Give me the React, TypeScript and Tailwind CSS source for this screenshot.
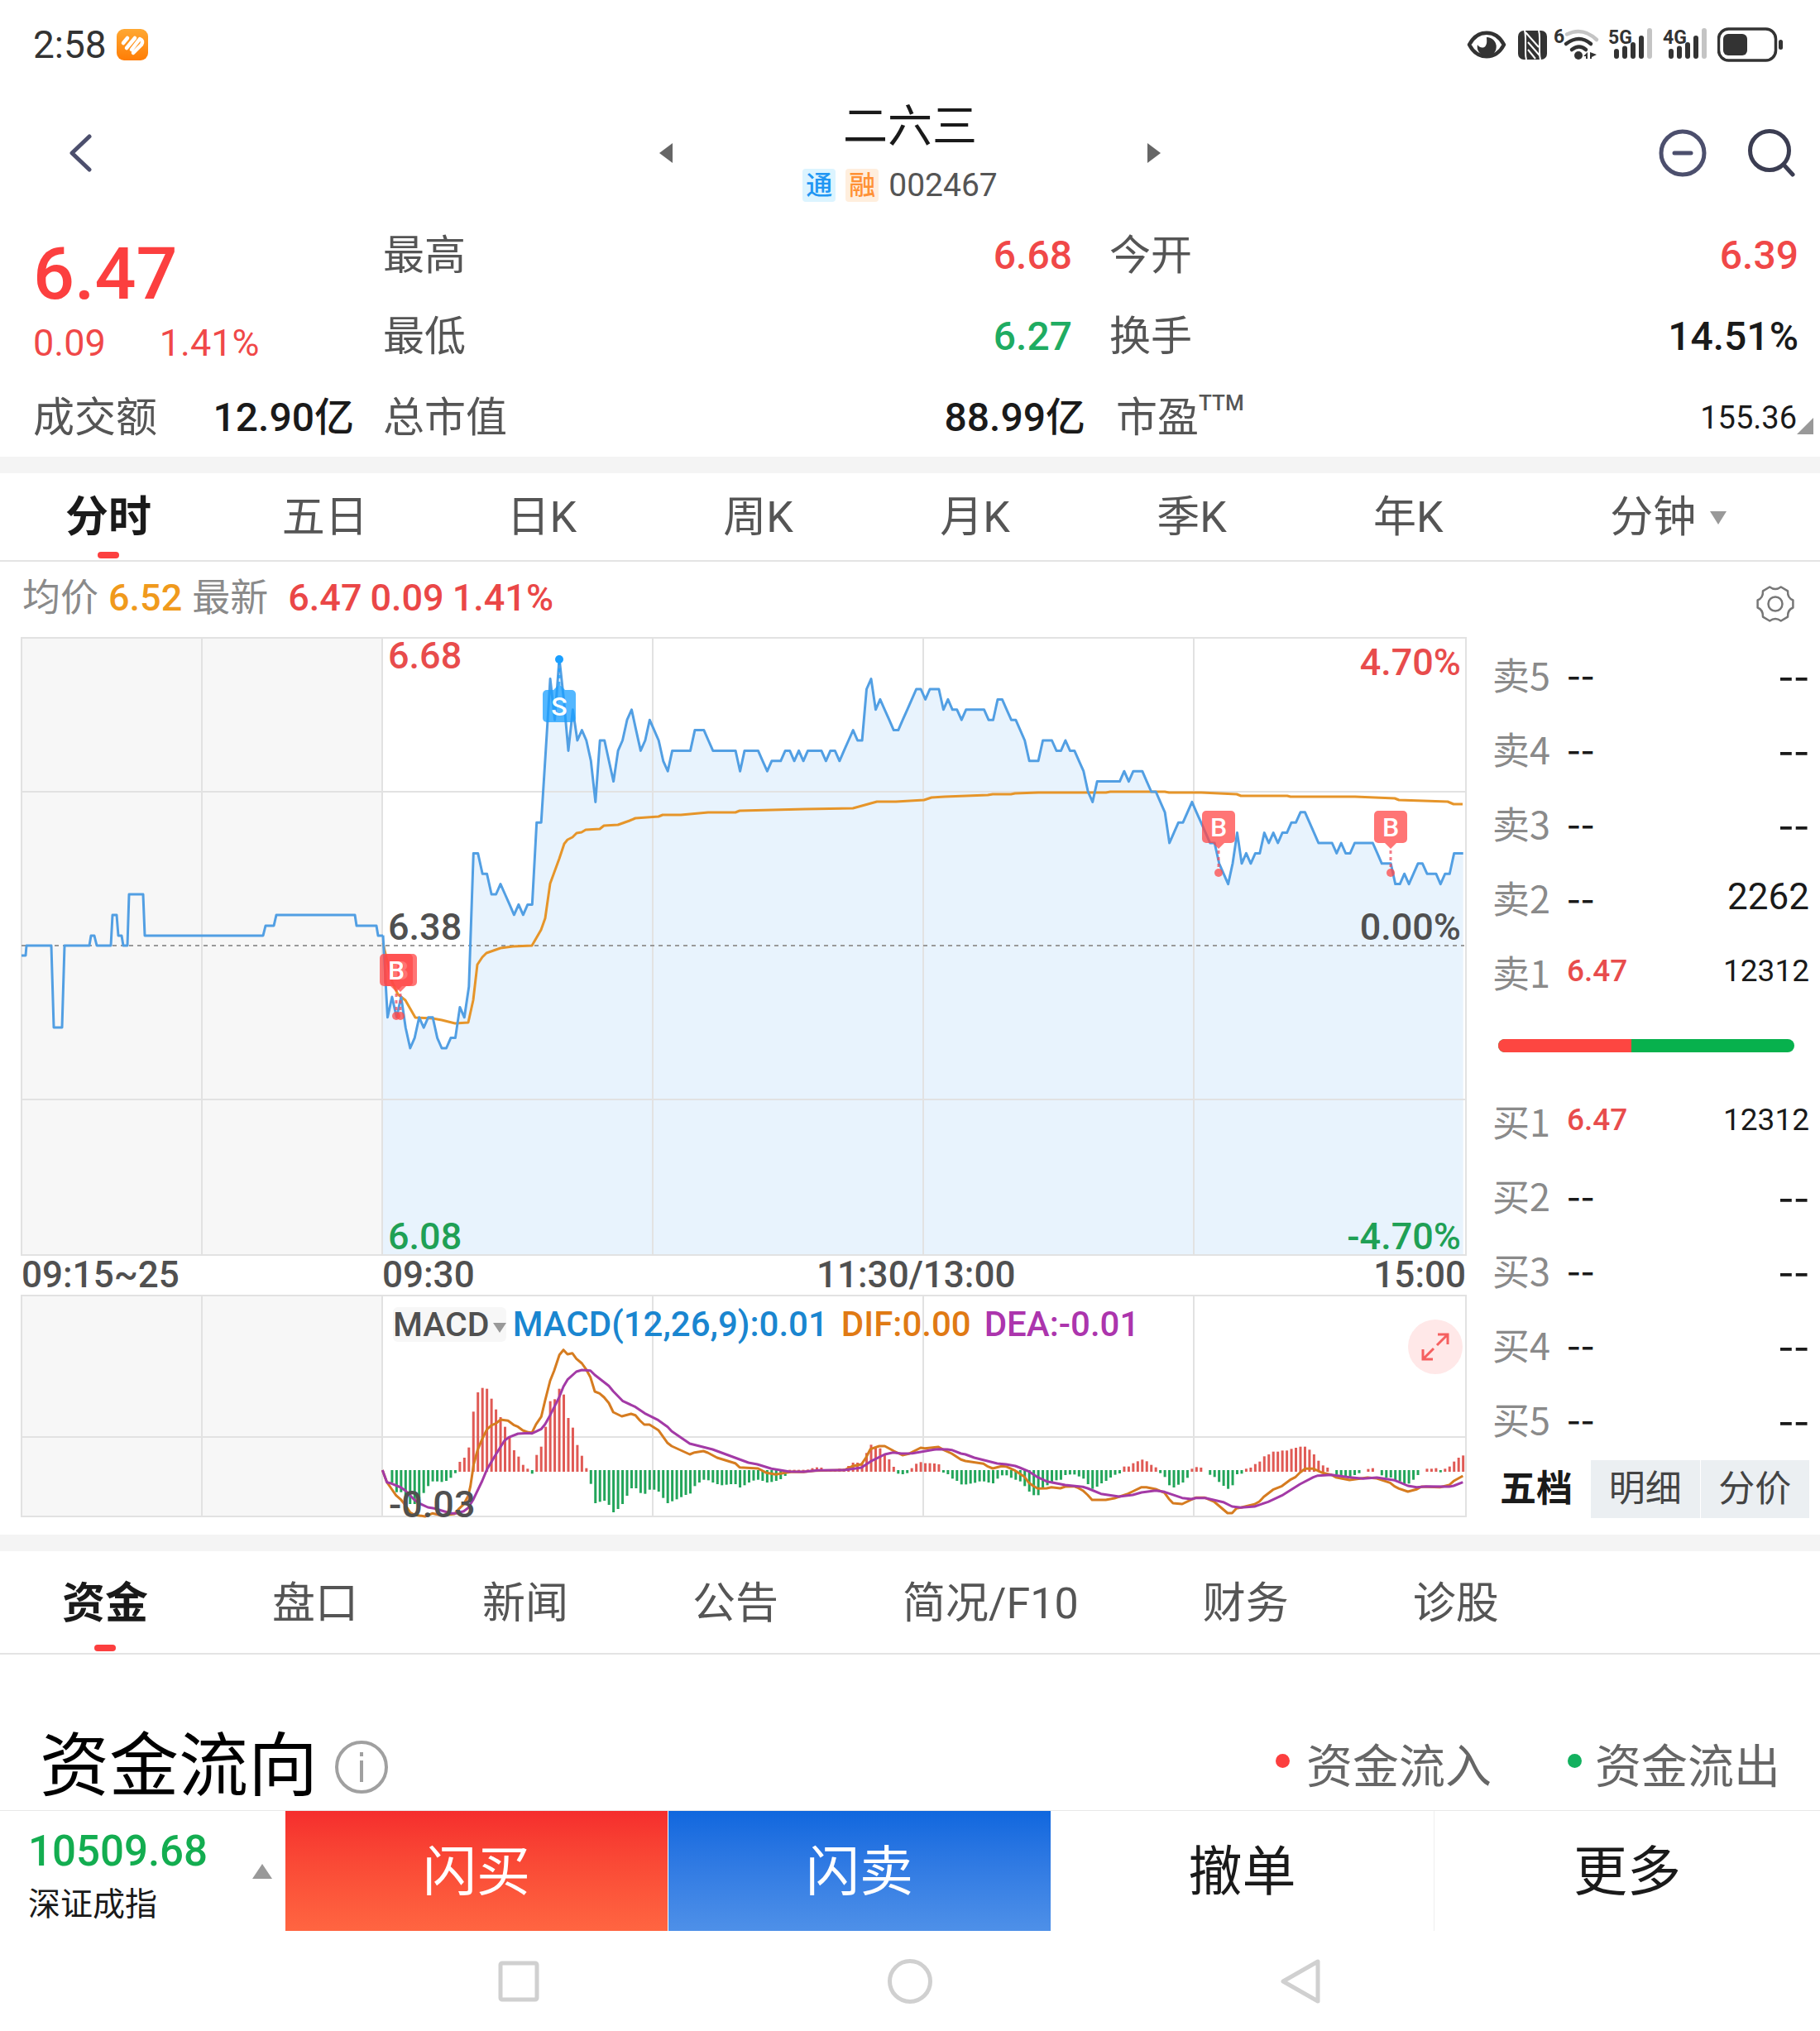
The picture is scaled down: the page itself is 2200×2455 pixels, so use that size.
import React from 'react';

/* ---------- Market data ---------- */

const PREV_CLOSE_Y = 1143;
const TICK = 12.4;
const MINUTE = 5.463;
const OPEN_X = 463;
const MACD_ZERO = 1778;

const minuteX = (i: number) => OPEN_X + i * MINUTE;

// Price per minute, in cents above the previous close.
const price: number[] = [
  1, -7, -5, -7, -5, -8, -10, -9, -7, -8, -7, -7, -9, -10, -10, -9, -9, -6, -7, -4,
  9, 9, 7, 7, 5, 5, 6, 5, 4, 3, 4, 3, 4, 4, 12, 12, 19, 26, 22, 28,
  24, 19, 23, 20, 21, 20, 18, 14, 20, 20, 18, 16, 19, 20, 22, 23, 21, 19, 20, 22,
  21, 20, 18, 17, 19, 19, 19, 19, 19, 21, 21, 21, 20, 19, 19, 19, 19, 19, 19, 17,
  19, 19, 19, 19, 18, 17, 18, 18, 18, 19, 19, 18, 19, 18, 19, 19, 19, 19, 18, 19,
  19, 18, 19, 20, 21, 20, 20, 25, 26, 23, 24, 23, 22, 21, 21, 22, 23, 24, 25, 25,
  24, 25, 25, 25, 23, 24, 23, 23, 22, 23, 23, 23, 23, 23, 22, 22, 24, 24, 23, 22,
  22, 21, 20, 18, 18, 18, 20, 20, 20, 19, 19, 20, 19, 19, 18, 17, 15, 14, 16, 16,
  16, 16, 16, 16, 17, 16, 17, 17, 17, 16, 15, 15, 14, 13, 10, 11, 12, 12, 13, 14,
  13, 12, 11, 10, 10, 8, 7, 6, 8, 11, 8, 9, 8, 9, 9, 11, 10, 11, 10, 11,
  11, 12, 12, 13, 13, 12, 11, 10, 10, 10, 10, 9, 10, 9, 9, 10, 10, 10, 10, 10,
  9, 8, 8, 8, 6, 6, 7, 6, 7, 8, 8, 7, 7, 7, 6, 7, 7, 9, 9, 9,
];

const auction =
  '26,1155 31,1155 32,1143 62,1143 65,1242 75,1242 78,1143 108,1143 110,1131 114,1131 117,1143 134,1143 136,1106 141,1106 143,1131 147,1131 149,1143 154,1143 156,1081 173,1081 175,1131 318,1131 321,1119 331,1119 334,1106 429,1106 431,1119 455,1119 457,1131 463,1131';

const average =
  '463,1140 474,1187 481,1202 490,1209 502,1230 523,1231 534,1233 550,1237 566,1236 572,1209 577,1166 583,1157 588,1152 605,1146 620,1144 643,1143 654,1124 659,1110 665,1068 676,1038 682,1020 686,1015 692,1012 697,1007 703,1006 708,1003 725,1002 730,998 747,997 761,992 768,989 796,987 801,985 823,985 856,982 889,982 894,980 973,978 1031,977 1060,969 1083,969 1117,967 1126,964 1142,963 1194,961 1200,960 1222,960 1227,959 1255,958 1337,958 1342,957 1408,957 1413,958 1452,958 1495,960 1500,962 1556,962 1560,963 1638,963 1686,965 1691,967 1750,969 1757,972 1768,972';

// MACD histogram per minute, three units to a pixel.
const histogram: number[] = [
  0, 0, -42, -77, -77, -97, -120, -120, -100, -80, -55, -38, -38, -40, -36, -25, -8, 33, 48, 85,
  215, 285, 301, 298, 262, 223, 195, 160, 125, 75, 52, 22, 8, -10, 58, 88, 160, 253, 260, 298,
  277, 192, 157, 94, 55, 10, -47, -117, -112, -108, -123, -150, -138, -120, -90, -63, -63, -80, -83, -68,
  -68, -75, -98, -117, -110, -103, -95, -87, -82, -55, -42, -32, -34, -42, -48, -52, -50, -48, -48, -60,
  -52, -42, -35, -32, -36, -42, -40, -36, -30, -18, 4, 4, 4, 4, 5, 10, 13, 12, 5, 5,
  6, 8, 8, 18, 30, 30, 28, 65, 95, 87, 82, 60, 42, 15, -10, -12, -8, 10, 26, 32,
  28, 28, 27, 24, -6, -12, -28, -36, -49, -49, -46, -43, -38, -38, -42, -45, -28, -16, -16, -25,
  -32, -38, -55, -75, -88, -88, -65, -52, -40, -34, -32, -15, -13, -13, -20, -28, -48, -65, -57, -45,
  -36, -24, -14, -9, 16, 16, 28, 35, 41, 35, 22, 13, -8, -22, -52, -60, -50, -42, -25, 8,
  14, 12, 0, -14, -22, -40, -54, -65, -52, -12, -10, 8, 12, 25, 34, 53, 60, 70, 70, 74,
  74, 80, 84, 88, 88, 77, 60, 37, 20, 12, 0, -14, -18, -20, -22, -15, -8, 0, 7, 10,
  0, -16, -25, -24, -34, -38, -45, -46, -32, -15, 0, 8, 8, 10, -5, 8, 16, 34, 48, 56,
];

type Pt = [number, number];
const trace = (originX: number, pts: Pt[]) =>
  pts.map(([x, y]) => `${(originX + x / 2.24).toFixed(1)},${(1540 + y / 3).toFixed(1)}`).join(' ');

const dif =
  trace(440, [
    [50, 711], [62, 755], [75, 780], [87, 803], [100, 818], [112, 838], [125, 865], [137, 873], [165, 879], [185, 868],
    [210, 875], [245, 870], [258, 850], [270, 835], [282, 805], [288, 770], [297, 690], [307, 640], [320, 598], [333, 563],
    [346, 548], [357, 542], [370, 528], [390, 532], [405, 547], [417, 554], [430, 567], [445, 574], [455, 575], [466, 545],
    [480, 517], [490, 460], [504, 387], [515, 350], [529, 293], [540, 275], [551, 291], [564, 287], [575, 307], [590, 324],
    [602, 347], [613, 374], [625, 426], [638, 433], [650, 447], [663, 468], [675, 501], [698, 516], [723, 507], [735, 512],
    [747, 531], [759, 546], [773, 546], [797, 566], [822, 613], [833, 624], [882, 654], [895, 647], [919, 642], [931, 648],
    [956, 666], [1005, 686], [1017, 701], [1067, 705], [1090, 721], [1115, 727], [1140, 721], [1160, 717], [1190, 718],
    [1220, 713], [1300, 711], [1322, 697], [1347, 690], [1359, 666], [1371, 635], [1395, 624], [1410, 624], [1435, 642],
    [1458, 657], [1475, 652],
  ]) +
  ' ' +
  trace(1100, [
    [0, 650], [29, 630], [40, 632], [77, 627], [90, 637], [113, 651], [138, 673], [150, 678], [199, 688], [211, 698],
    [224, 705], [248, 697], [260, 698], [285, 713], [309, 734], [322, 757], [334, 769], [346, 778], [370, 777], [383, 773],
    [407, 777], [420, 771], [444, 770], [456, 776], [468, 785], [481, 801], [493, 819], [530, 819], [554, 813], [590, 797],
    [602, 789], [627, 773], [640, 773], [665, 780], [689, 793], [701, 815], [712, 831], [737, 834], [762, 818], [774, 811],
    [798, 811], [823, 825], [860, 867], [872, 867], [884, 850], [896, 847], [933, 835], [946, 825], [958, 808], [983, 782],
    [1007, 769], [1031, 745], [1044, 736], [1056, 720], [1070, 706], [1092, 706], [1117, 721], [1141, 728], [1153, 737],
    [1190, 747], [1239, 738], [1264, 741], [1300, 757], [1312, 770], [1324, 778], [1348, 789], [1372, 781], [1385, 771],
    [1435, 773], [1460, 765], [1472, 751], [1497, 732],
  ]);

const dea =
  trace(440, [
    [50, 711], [62, 755], [75, 760], [100, 774], [112, 785], [137, 820], [150, 832], [173, 846], [190, 850], [235, 868],
    [250, 868], [270, 860], [282, 848], [295, 820], [320, 750], [333, 708], [357, 654], [380, 605], [392, 592], [417, 579],
    [445, 577], [455, 578], [480, 562], [490, 545], [504, 512], [529, 445], [540, 408], [551, 383], [575, 354], [590, 348],
    [613, 350], [625, 366], [663, 406], [675, 425], [700, 460], [735, 482], [760, 505], [797, 530], [822, 554], [833, 570],
    [882, 615], [944, 636], [1041, 684], [1065, 690], [1103, 706], [1150, 716], [1190, 717], [1230, 712], [1300, 711],
    [1347, 702], [1371, 680], [1410, 654], [1433, 647], [1455, 651], [1485, 650],
  ]) +
  ' ' +
  trace(1100, [
    [65, 637], [77, 635], [101, 636], [113, 638], [138, 651], [150, 654], [174, 666], [236, 687], [260, 690], [285, 696],
    [297, 702], [322, 716], [346, 737], [370, 752], [420, 765], [468, 772], [481, 777], [517, 797], [566, 807], [603, 801],
    [627, 792], [665, 785], [689, 790], [737, 812], [762, 816], [774, 812], [800, 812], [848, 827], [872, 843], [896, 847],
    [933, 843], [970, 826], [1007, 803], [1056, 762], [1092, 737], [1104, 731], [1141, 728], [1190, 737], [1227, 742],
    [1264, 738], [1312, 748], [1324, 754], [1348, 768], [1372, 773], [1397, 770], [1460, 771], [1472, 768], [1497, 755],
  ]);

/* ---------- Status bar ---------- */

function SignalBars({ label }: { label: string }) {
  return (
    <svg viewBox="0 0 54 40" className="h-10 w-[54px] overflow-visible" aria-label={label + ' signal'}>
      <text x="0" y="19" fontSize="23" fontWeight="700" fill="#333" className="font-['Roboto',sans-serif]">
        {label}
      </text>
      <g strokeWidth="6" strokeLinecap="round" stroke="#333">
        <path d="M10 28V34M20 24.500V34M30 20V34M40 12V34" />
        <path d="M50 3V34" stroke="#c4c4c4" />
      </g>
    </svg>
  );
}

function StatusBar() {
  return (
    <div className="flex h-[108px] items-center pl-10 pr-11">
      <span className="text-[46px] leading-none text-[#333]">2:58</span>
      <svg viewBox="0 0 38 38" className="ml-3 h-[38px] w-[38px]" aria-hidden="true">
        <defs>
          <linearGradient id="appBadge" x1="0" y1="0" x2="0" y2="1">
            <stop offset="0" stopColor="#ffa832" />
            <stop offset="1" stopColor="#ff7d05" />
          </linearGradient>
        </defs>
        <rect width="38" height="38" rx="9" fill="url(#appBadge)" />
        <g stroke="#fff" strokeWidth="4.500" strokeLinecap="round" strokeLinejoin="round" fill="none">
          <path d="M8 17 13 11" />
          <path d="M12 23 22 11" />
          <path d="M18 25 28 12Q33 14 30 19L20 29" />
        </g>
      </svg>
      <div className="ml-auto flex items-center">
        <svg viewBox="0 0 48 34" className="h-[34px] w-12" aria-label="Eye comfort">
          <path d="M3 17C13-2 35-2 45 17C35 36 13 36 3 17Z" fill="none" stroke="#333" strokeWidth="4.500" strokeLinejoin="round" />
          <path d="M24 8a11.500 11.500 0 1 1-11 9c2 4 8 5 10 1 2-3 1-7 1-10Z" fill="#333" />
        </svg>
        <svg viewBox="0 0 35 35" className="ml-3.5 h-[35px] w-[35px]" aria-label="NFC">
          <rect width="35" height="35" rx="7" fill="#333" />
          <path d="M8 0q1 4 1 9v17q0 6 1 9M27 35q-1-4-1-9V9q0-6-1-9" stroke="#fff" strokeWidth="2" fill="none" />
          <path d="M9 2 25 20M12 14 26 30M12 23 21 34" stroke="#fff" strokeWidth="2" fill="none" />
        </svg>
        <svg viewBox="0 0 54 40" className="ml-2.5 h-10 w-[54px] overflow-visible" aria-label="Wi-Fi">
          <text x="-2" y="18" fontSize="23" fontWeight="700" fill="#333" className="font-['Roboto',sans-serif]">
            6
          </text>
          <g fill="none" strokeWidth="4.500" strokeLinecap="round" stroke="#333">
            <path d="M14 7.500Q33-2 50 14" stroke="#c4c4c4" />
            <path d="M13 19Q29 7 43 19" />
            <path d="M20 26Q29 19 37 26" />
          </g>
          <circle cx="28" cy="33" r="5" fill="#333" />
          <path d="M34 34 39 29V37H37V34ZM42 29 50 32 44 35V37H42Z" fill="#333" />
        </svg>
        <div className="ml-2.5">
          <SignalBars label="5G" />
        </div>
        <div className="ml-3">
          <SignalBars label="4G" />
        </div>
        <svg viewBox="0 0 80 42" className="ml-3 h-[42px] w-20" aria-label="Battery">
          <rect x="1.500" y="2" width="69" height="38" rx="12" fill="none" stroke="#333" strokeWidth="3.500" />
          <rect x="7" y="8" width="29" height="26" rx="6" fill="#333" />
          <rect x="74" y="15" width="5" height="12" rx="2.500" fill="#333" />
        </svg>
      </div>
    </div>
  );
}

/* ---------- Title bar ---------- */

function TitleBar() {
  return (
    <header className="grid h-[150px] grid-cols-[1fr_auto_1fr] items-center pt-1">
      <button type="button" aria-label="返回" className="justify-self-start pl-[82px]">
        <svg viewBox="0 0 30 46" className="h-[46px] w-[30px]" fill="none" stroke="#4c4f6d" strokeWidth="5" strokeLinecap="round" strokeLinejoin="round">
          <path d="M26 3 5 23 26 43" />
        </svg>
      </button>
      <div className="flex items-center">
        <button type="button" aria-label="上一只">
          <svg viewBox="0 0 16 24" className="h-6 w-4" fill="#666">
            <path d="M16 0V24L0 12Z" />
          </svg>
        </button>
        <div className="mx-[167px] flex w-60 flex-col items-center">
          <h1 className="text-[54px] leading-[62px] text-[#1a1a1a]">二六三</h1>
          <div className="mt-4 flex items-center pr-6 whitespace-nowrap">
            <span className="flex h-10 w-10 items-center justify-center rounded bg-[#dcf4ff] text-[32px] leading-none font-medium text-[#2196f3]">通</span>
            <span className="ml-3 flex h-10 w-10 items-center justify-center rounded bg-[#ffeedd] text-[32px] leading-none font-medium text-[#ff9135]">融</span>
            <span className="ml-3 text-[39px] leading-[46px] text-[#555]">002467</span>
          </div>
        </div>
        <button type="button" aria-label="下一只">
          <svg viewBox="0 0 16 24" className="h-6 w-4" fill="#666">
            <path d="M0 0V24L16 12Z" />
          </svg>
        </button>
      </div>
      <div className="flex items-center gap-[49px] justify-self-end pr-[30px]">
        <button type="button" aria-label="删除自选">
          <svg viewBox="0 0 58 58" className="h-[58px] w-[58px]" fill="none" stroke="#4c4f6d" strokeWidth="5" strokeLinecap="round">
            <circle cx="29" cy="29" r="26" />
            <path d="M19 29H39" />
          </svg>
        </button>
        <button type="button" aria-label="搜索">
          <svg viewBox="0 0 58 58" className="h-[58px] w-[58px]" fill="none" stroke="#3b3d52" strokeWidth="5" strokeLinecap="round">
            <circle cx="27" cy="26" r="23.500" />
            <path d="M44 43 55 55" />
          </svg>
        </button>
      </div>
    </header>
  );
}

/* ---------- Quote summary ---------- */

type Fact = { label: string; value: string; tone: string };
const facts: Fact[][] = [
  [
    { label: '最高', value: '6.68', tone: 'text-[#f04848]' },
    { label: '最低', value: '6.27', tone: 'text-[#1fac62]' },
    { label: '总市值', value: '88.99亿', tone: 'text-[#1a1a1a]' },
  ],
  [
    { label: '今开', value: '6.39', tone: 'text-[#f04848]' },
    { label: '换手', value: '14.51%', tone: 'text-[#1a1a1a]' },
  ],
];

function Quote() {
  return (
    <section className="grid grid-cols-[463px_849px_1fr] text-[50px]">
      <div className="flex h-[294px] flex-col pl-10">
        <div className="mt-6 text-[88px] leading-[98px] font-medium text-[#fc3f3f]">6.47</div>
        <div className="mt-1 flex gap-[65px] text-[45px] leading-[62px] text-[#f04848]">
          <span>0.09</span>
          <span>1.41%</span>
        </div>
        <div className="mt-auto flex h-[98px] items-center justify-between pt-1 pr-[35px]">
          <span className="text-[#555]">成交额</span>
          <span className="text-[48px] font-medium text-[#1a1a1a]">12.90亿</span>
        </div>
      </div>
      <dl>
        {facts[0].map((f, i) => (
          <div key={f.label} className={'flex h-[98px] items-center justify-between pt-1 ' + (i < 2 ? 'pr-4' : '')}>
            <dt className="text-[#555]">{f.label}</dt>
            <dd className={'text-[48px] font-medium ' + f.tone}>{f.value}</dd>
          </div>
        ))}
      </dl>
      <dl>
        {facts[1].map((f) => (
          <div key={f.label} className="flex h-[98px] items-center justify-between pt-1 pr-[26px] pl-[29px]">
            <dt className="text-[#555]">{f.label}</dt>
            <dd className={'text-[48px] font-medium ' + f.tone}>{f.value}</dd>
          </div>
        ))}
        <div className="flex h-[98px] items-center justify-between pt-1 pr-2 pl-[37px]">
          <dt className="flex text-[#555]">
            市盈<span className="text-[26px] font-medium">TTM</span>
          </dt>
          <dd className="flex items-center text-[38px] text-[#1a1a1a]">
            155.36
            <svg viewBox="0 0 20 20" className="mt-5 h-5 w-5" fill="#999" aria-hidden="true">
              <path d="M20 0V20H0Z" />
            </svg>
          </dd>
        </div>
      </dl>
    </section>
  );
}

/* ---------- Tabs ---------- */

const periods = ['分时', '五日', '日K', '周K', '月K', '季K', '年K'];

function PeriodTabs() {
  return (
    <nav className="grid h-[107px] grid-cols-[repeat(7,5fr)_7fr] border-b-2 border-[#e4e4e4] text-[52px] text-[#555]">
      {periods.map((p, i) => (
        <button key={p} type="button" className="relative flex items-center justify-center pt-0.5">
          <span className={i === 0 ? 'font-bold text-[#1a1a1a]' : ''}>{p}</span>
          {i === 0 && <span className="absolute bottom-0.5 h-2 w-[26px] rounded-full bg-[#fc3f3f]" />}
        </button>
      ))}
      <button type="button" className="flex items-center justify-center gap-[17px] pt-0.5">
        <span>分钟</span>
        <svg viewBox="0 0 20 16" className="h-4 w-5" fill="#999" aria-hidden="true">
          <path d="M0 0H20L10 16Z" />
        </svg>
      </button>
    </nav>
  );
}

const topics = ['资金', '盘口', '新闻', '公告', '简况/F10', '财务', '诊股'];

function TopicTabs() {
  return (
    <nav className="flex h-[125px] gap-[150px] border-b-2 border-[#e4e4e4] pl-[75px] text-[52px] text-[#555]">
      {topics.map((t, i) => (
        <button key={t} type="button" className="relative flex items-center justify-center pt-1 whitespace-nowrap">
          <span className={i === 0 ? 'font-bold text-[#1a1a1a]' : ''}>{t}</span>
          {i === 0 && <span className="absolute bottom-0.5 h-2 w-[26px] rounded-full bg-[#fc3f3f]" />}
        </button>
      ))}
    </nav>
  );
}

/* ---------- Charts ---------- */

function BuyMark({ x, top }: { x: number; top: number }) {
  return (
    <g>
      <g fill="#ff4848" opacity="0.75">
        <rect x={x - 20} y={top} width="40" height="39" rx="5" />
        <path d={`M${x - 7} ${top + 39}h14l-7 7z`} />
        <circle cx={x} cy={top + 75} r="5" />
        <path d={`M${x} ${top + 48}V${top + 70}`} stroke="#f05060" strokeWidth="3" strokeDasharray="4 4" />
      </g>
      <text x={x} y={top + 31} fontSize="32" fontWeight="500" textAnchor="middle" fill="#fff">
        B
      </text>
    </g>
  );
}

function PriceChart() {
  const pts = price.map((k, i) => `${minuteX(i).toFixed(1)},${(PREV_CLOSE_Y - k * TICK).toFixed(1)}`).join(' ');
  const lastX = minuteX(price.length - 1).toFixed(1);
  return (
    <svg viewBox="26 771 1746 746" className="block w-full overflow-visible" role="img" aria-label="分时走势">
      <rect x="26" y="771" width="436" height="746" fill="#f7f7f7" />
      <polygon points={`${OPEN_X},1517 ${pts} ${lastX},1517`} fill="#e8f3fd" />
      <g stroke="#e2e2e2" strokeWidth="2" fill="none">
        <rect x="26" y="771" width="1746" height="746" />
        <path d="M26 957H1772M26 1329H1772M244 771V1517M462 771V1517M789 771V1517M1116 771V1517M1443 771V1517" />
      </g>
      <path d="M26 1143H1770" stroke="#999" strokeWidth="2" strokeDasharray="5 5" />
      <g fill="none" strokeWidth="3" strokeLinejoin="round">
        <polyline points={average} stroke="#e6952a" />
        <polyline points={auction} stroke="#529fe3" />
        <polyline points={pts} stroke="#529fe3" />
      </g>
      <BuyMark x={484} top={1153} />
      <BuyMark x={479} top={1153} />
      <BuyMark x={1473} top={980} />
      <BuyMark x={1681} top={980} />
      <g fill="#1a9fff">
        <g opacity="0.75">
          <rect x="656" y="834" width="40" height="39" rx="5" />
          <path d="M669 834h14l-7-7z" />
          <path d="M676 800V828" stroke="#1a9fff" strokeWidth="3" strokeDasharray="4 4" />
        </g>
        <circle cx="676" cy="797" r="5" />
      </g>
      <text x="676" y="865" fontSize="32" fontWeight="500" textAnchor="middle" fill="#fff">
        S
      </text>
      <g fontSize="45" fontWeight="500">
        <text x="469" y="808" fill="#e84c4c">6.68</text>
        <text x="469" y="1136" fill="#505050">6.38</text>
        <text x="469" y="1510" fill="#1fa055">6.08</text>
        <g textAnchor="end">
          <text x="1766" y="816" fill="#e84c4c">4.70%</text>
          <text x="1766" y="1136" fill="#505050">0.00%</text>
          <text x="1766" y="1510" fill="#1fa055">-4.70%</text>
        </g>
      </g>
    </svg>
  );
}

function MacdChart() {
  return (
    <div className="relative">
      <svg viewBox="26 1566 1746 267" className="block w-full overflow-visible" role="img" aria-label="MACD">
        <rect x="26" y="1566" width="436" height="267" fill="#f7f7f7" />
        <g stroke="#e2e2e2" strokeWidth="2" fill="none">
          <rect x="26" y="1566" width="1746" height="267" />
          <path d="M26 1737H1772M244 1566V1833M462 1566V1833M789 1566V1833M1116 1566V1833M1443 1566V1833" />
        </g>
        {histogram.map((v, i) => {
          if (v === 0) return null;
          const len = Math.abs(v) / 3 + 1;
          return (
            <rect
              key={i}
              x={minuteX(i) - 1.5}
              y={v > 0 ? MACD_ZERO + 1 - len : MACD_ZERO - 1}
              width="3"
              height={len}
              fill={v > 0 ? '#e05a55' : '#22a55a'}
            />
          );
        })}
        <g fill="none" strokeWidth="3" strokeLinejoin="round">
          <polyline points={dif} stroke="#d67c20" />
          <polyline points={dea} stroke="#a33aa6" />
        </g>
        <text x="470" y="1834" fontSize="45" fontWeight="500" fill="#505050">-0.03</text>
      </svg>
      <div className="absolute top-3.5 left-[449px] flex items-center text-[42px] leading-[42px] font-medium whitespace-nowrap">
        <button type="button" className="flex items-center rounded-md bg-[#f7f7f7] text-[#505050]">
          <span className="text-[41px]">MACD</span>
          <svg viewBox="0 0 16 12" className="mt-2 ml-1 h-3 w-4" fill="#999" aria-hidden="true">
            <path d="M0 0H16L8 12Z" />
          </svg>
        </button>
        <span className="ml-2 text-[#1a86d0]">MACD(12,26,9):0.01</span>
        <span className="ml-4 text-[#e07a14]">DIF:0.00</span>
        <span className="ml-4 text-[#ac35ad]">DEA:-0.01</span>
      </div>
      <button type="button" aria-label="全屏" className="absolute top-[29px] right-1 flex h-[66px] w-[66px] items-center justify-center rounded-full bg-[#ffe8e8]">
        <svg viewBox="0 0 34 34" className="h-[34px] w-[34px]" fill="none" stroke="#f56060" strokeWidth="3">
          <path d="M19 15 32 2M20 2H32V14M15 19 2 32M2 20V32H14" />
        </svg>
      </button>
    </div>
  );
}

/* ---------- Order book ---------- */

type Level = { name: string; price?: string; size?: string };
const asks: Level[] = [
  { name: '卖5' },
  { name: '卖4' },
  { name: '卖3' },
  { name: '卖2', size: '2262' },
  { name: '卖1', price: '6.47', size: '12312' },
];
const bids: Level[] = [{ name: '买1', price: '6.47', size: '12312' }, { name: '买2' }, { name: '买3' }, { name: '买4' }, { name: '买5' }];

function Levels({ rows, label }: { rows: Level[]; label: string }) {
  return (
    <table className="w-full" aria-label={label}>
      <tbody>
        {rows.map((r) => (
          <tr key={r.name} className="h-[90px]">
            <th scope="row" className="w-[90px] p-0 text-left font-['Noto_Sans_CJK_SC',sans-serif] text-[45px] leading-none font-normal text-[#8a8a8a]">
              {r.name}
            </th>
            <td className="p-0">
              {r.price ? (
                <span className="text-[37px] leading-none font-medium text-[#e84c4c]">{r.price}</span>
              ) : (
                <span className="font-['Noto_Sans_CJK_SC',sans-serif] text-[48px] leading-none text-[#1a1a1a]">--</span>
              )}
            </td>
            <td className="p-0 text-right text-[#1a1a1a]">
              {r.size ? (
                <span className={r.size.length > 4 ? 'text-[37px] leading-none' : 'text-[44px] leading-none'}>{r.size}</span>
              ) : (
                <span className="font-['Noto_Sans_CJK_SC',sans-serif] text-[54px] leading-none">--</span>
              )}
            </td>
          </tr>
        ))}
      </tbody>
    </table>
  );
}

function GearIcon() {
  return (
    <svg viewBox="0 0 46 44" className="h-11 w-[46px]" fill="none" stroke="#777" strokeWidth="2.500" strokeLinejoin="round">
      <path d="M44.400 17.500V26.500Q37.700 29 38 37.600L29.800 42.500Q23 37.500 16.200 42.500L8 37.600Q8.300 29 1.600 26.500V17.500Q8.300 15 8 6.400L16.200 1.500Q23 6.500 29.800 1.500L38 6.400Q37.700 15 44.400 17.500Z" />
      <circle cx="23" cy="22" r="8.500" />
    </svg>
  );
}

function OrderBook() {
  return (
    <aside className="w-[383px] shrink-0">
      <div className="flex h-[90px] items-center justify-end pt-3 pr-[18px]">
        <button type="button" aria-label="设置">
          <GearIcon />
        </button>
      </div>
      <Levels rows={asks} label="卖盘" />
      <div className="flex h-[90px] items-center pr-[18px] pl-[7px]">
        <div className="flex h-4 w-full overflow-hidden rounded-full bg-[#07b14d]">
          <div className="w-[45%] bg-[#fd4641]" />
        </div>
      </div>
      <Levels rows={bids} label="买盘" />
      <div className="mt-1.5 grid h-[70px] grid-cols-[118px_1fr_1fr] gap-px text-[44px] leading-none text-[#444]">
        <button type="button" className="pr-3 font-bold text-[#1a1a1a]">五档</button>
        <button type="button" className="bg-[#ebeff2]">明细</button>
        <button type="button" className="bg-[#ebeff2]">分价</button>
      </div>
    </aside>
  );
}

function Market() {
  return (
    <section className="flex gap-8 pr-[13px] pb-5 pl-[26px]">
      <div className="min-w-0 flex-1">
        <div className="flex h-[92px] items-center pb-1.5 pl-px text-[46px] leading-none">
          <span className="text-[#8a8a8a]">均价</span>
          <span className="ml-3 text-[45px] font-medium text-[#f09a1c]">6.52</span>
          <span className="ml-3 text-[#8a8a8a]">最新</span>
          <span className="ml-6 flex gap-2.5 text-[45px] font-medium text-[#ea4747]">
            <span>6.47</span>
            <span>0.09</span>
            <span>1.41%</span>
          </span>
        </div>
        <PriceChart />
        <div className="grid h-[49px] grid-cols-[436fr_525fr_785fr] items-center pb-0.5 text-[44px] leading-none font-medium text-[#505050]">
          <span>09:15~25</span>
          <span>09:30</span>
          <span className="flex justify-between">
            <span>11:30/13:00</span>
            <span>15:00</span>
          </span>
        </div>
        <MacdChart />
      </div>
      <OrderBook />
    </section>
  );
}

/* ---------- Fund flow and footer ---------- */

function FundFlow() {
  return (
    <section className="flex h-[188px] items-end justify-between pr-12 pb-2.5 pl-12">
      <div className="flex items-center">
        <h2 className="text-[84px] leading-[84px] text-black">资金流向</h2>
        <button type="button" aria-label="说明" className="ml-5">
          <svg viewBox="0 0 66 66" className="h-[66px] w-[66px]" fill="none" stroke="#a0a0a0" strokeWidth="4">
            <circle cx="33" cy="33" r="30" />
            <path d="M33 25V51M33 15V20" />
          </svg>
        </button>
      </div>
      <div className="mb-3 flex items-center gap-[92px] text-[56px] leading-[60px] text-[#666]">
        <span className="flex items-center gap-5">
          <span className="mb-4 h-[17px] w-[17px] rounded-full bg-[#fc3f3f]" />
          资金流入
        </span>
        <span className="flex items-center gap-4">
          <span className="mb-4 h-[17px] w-[17px] rounded-full bg-[#13b15f]" />
          资金流出
        </span>
      </div>
    </section>
  );
}

function TradeBar() {
  return (
    <footer className="border-t border-[#e8e8e8]">
      <div className="grid h-[145px] grid-cols-[345fr_462fr_463fr_464fr_466fr] text-[65px] leading-none">
        <button type="button" className="flex items-center justify-between pr-4 pl-[34px] text-left">
          <span className="flex flex-col pt-4">
            <span className="text-[51px] leading-[60px] font-medium text-[#13ad50]">10509.68</span>
            <span className="mt-1 text-[39px] leading-[60px] text-[#1a1a1a]">深证成指</span>
          </span>
          <svg viewBox="0 0 24 18" className="h-[18px] w-6" fill="#999" aria-hidden="true">
            <path d="M12 0 24 18H0Z" />
          </svg>
        </button>
        <button type="button" className="bg-linear-to-b from-[#f52d2d] to-[#ff6541] pt-1 text-white">闪买</button>
        <button type="button" className="border-l border-white bg-linear-to-b from-[#0f67de] to-[#4e90e8] pt-1 text-white">闪卖</button>
        <button type="button" className="border-r border-[#eee] pt-1 text-[#1a1a1a]">撤单</button>
        <button type="button" className="pt-1 text-[#1a1a1a]">更多</button>
      </div>
    </footer>
  );
}

function SystemNav() {
  return (
    <nav className="grid h-[122px] grid-cols-3 items-center justify-items-center px-[390px]">
      <button type="button" aria-label="最近任务">
        <svg viewBox="0 0 56 56" className="h-14 w-14" fill="none" stroke="#d0d0d0" strokeWidth="5">
          <rect x="6" y="6" width="44" height="44" rx="2" />
        </svg>
      </button>
      <button type="button" aria-label="主屏幕">
        <svg viewBox="0 0 56 56" className="h-14 w-14" fill="none" stroke="#d0d0d0" strokeWidth="5">
          <circle cx="28" cy="28" r="24.500" />
        </svg>
      </button>
      <button type="button" aria-label="返回">
        <svg viewBox="0 0 56 56" className="h-14 w-14" fill="none" stroke="#d0d0d0" strokeWidth="5" strokeLinejoin="round">
          <path d="M48 4V52L6 28Z" />
        </svg>
      </button>
    </nav>
  );
}

export default function App() {
  return (
    <main className="min-h-screen overflow-hidden bg-white font-['Roboto','Noto_Sans_CJK_SC',sans-serif]" lang="zh-CN">
      <StatusBar />
      <TitleBar />
      <Quote />
      <div className="h-5 bg-[#f4f4f4]" />
      <PeriodTabs />
      <Market />
      <div className="h-5 bg-[#f4f4f4]" />
      <TopicTabs />
      <FundFlow />
      <TradeBar />
      <SystemNav />
    </main>
  );
}
